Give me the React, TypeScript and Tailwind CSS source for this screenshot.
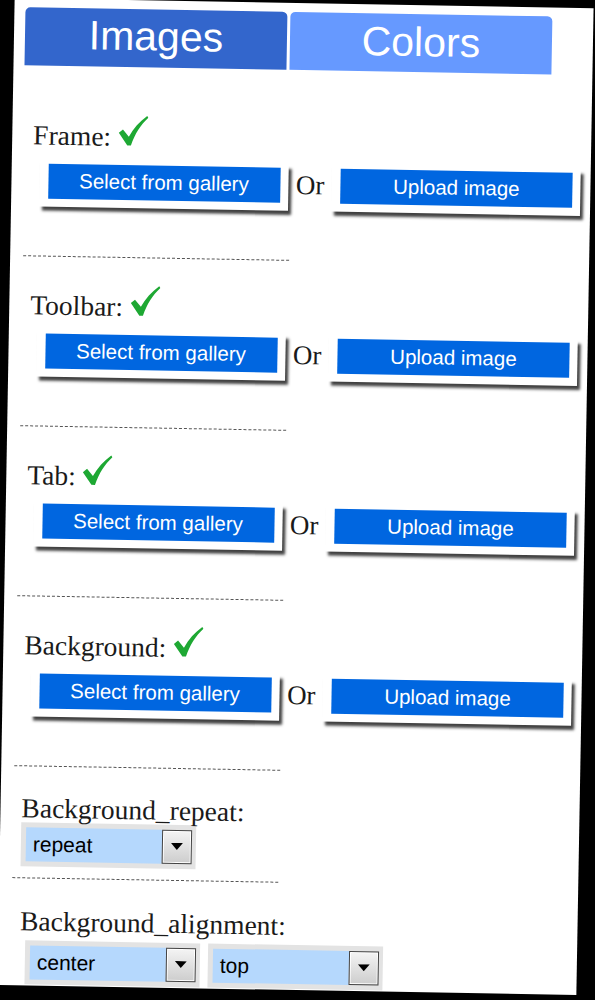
import React from "react";

const serif = "font-['Liberation_Serif','Times_New_Roman',serif]";
const sans = "font-['Liberation_Sans',Arial,sans-serif]";

function Check() {
  return (
    <svg width="30" height="31" viewBox="0 0 30 31" className="block shrink-0">
      <path
        d="M0.5 18 L4.6 14.5 L10.6 21.6 C15 13.4 21 6.2 28.6 0.6 L29.8 2.4 C22.4 9.4 16.6 18.6 12.8 30.4 L9.2 30.4 Z"
        fill="#1ea833"
      />
    </svg>
  );
}

function Btn({ label }: { label: string }) {
  return (
    <div className="bg-white pt-[3px] pl-[9px] pr-[8px] pb-[8px] shadow-[3px_4px_3px_rgba(0,0,0,0.75)]">
      <div
        className={`w-[232px] h-[35px] bg-[#0066e0] flex items-center justify-center text-white text-[20.5px] leading-none ${sans}`}
      >
        {label}
      </div>
    </div>
  );
}

function Sel({ value }: { value: string }) {
  return (
    <div className="flex bg-[#e3e3e3] pt-[5px] pb-[5px] pl-[5px] pr-[4px] w-[175px]">
      <div
        className={`w-[136px] h-[34px] bg-[#b5d8fd] flex items-center pl-[7px] text-[21px] leading-none text-black ${sans}`}
      >
        {value}
      </div>
      <div className="w-[30px] h-[34px] border border-[#444] bg-linear-to-b from-[#f4f4f4] to-[#cdcdcd] flex items-center justify-center shadow-[inset_1px_1px_0_#fff,inset_-1px_-1px_0_#fff]">
        <svg width="12" height="7" viewBox="0 0 12 7" className="block">
          <path d="M0 0 H12 L6 7 Z" fill="#000" />
        </svg>
      </div>
    </div>
  );
}

function Divider() {
  return <div className="ml-[12.5px] w-[266px] border-t border-dashed border-[#555]" />;
}

function ImageSection({ label, first }: { label: string; first?: boolean }) {
  return (
    <div>
      <div
        className={`flex items-baseline gap-[7px] h-[37px] pl-[21px] ${first ? "mt-[48px]" : "mt-[27px]"}`}
      >
        <span className={`text-[27.5px] leading-[32px] text-[#1a1a1a] ${serif}`}>{label}</span>
        <Check />
      </div>
      <div className="flex items-start mt-[10px] ml-[27.5px]">
        <Btn label="Select from gallery" />
        <span className={`ml-[8px] mr-[7px] mt-[4px] text-[27px] leading-[32px] text-[#1a1a1a] ${serif}`}>Or</span>
        <Btn label="Upload image" />
      </div>
      <div className="h-[49px]" />
      <Divider />
    </div>
  );
}

export default function App() {
  return (
    <div className="h-[1000px] bg-black overflow-hidden pt-[3px] pl-[5.5px]">
      <div className="w-[579px] h-[987px] bg-white rotate-[1deg] overflow-hidden">
        <div className="flex gap-[3px] pl-[11px] pt-[9px]">
          <div
            className={`w-[262px] h-[58px] rounded-t-[5px] bg-[#3366cc] text-white text-[41px] leading-none flex justify-center pt-[7px] ${sans}`}
          >
            Images
          </div>
          <div
            className={`w-[262px] h-[58px] rounded-t-[5px] bg-[#6699ff] text-white text-[41px] leading-none flex justify-center pt-[8px] ${sans}`}
          >
            Colors
          </div>
        </div>
        <ImageSection label="Frame:" first />
        <ImageSection label="Toolbar:" />
        <ImageSection label="Tab:" />
        <ImageSection label="Background:" />
        <div className="pl-[21px] mt-[27.5px]">
          <div className={`text-[27.5px] leading-[28px] text-[#1a1a1a] ${serif}`}>Background_repeat:</div>
          <Sel value="repeat" />
        </div>
        <div className="mt-[11px]">
          <Divider />
        </div>
        <div className="pl-[21.5px] mt-[29px]">
          <div className={`text-[27.5px] leading-[28px] text-[#1a1a1a] ${serif}`}>Background_alignment:</div>
          <div className="flex gap-[8px] mt-[5px] ml-[5.5px]">
            <Sel value="center" />
            <Sel value="top" />
          </div>
        </div>
      </div>
    </div>
  );
}
